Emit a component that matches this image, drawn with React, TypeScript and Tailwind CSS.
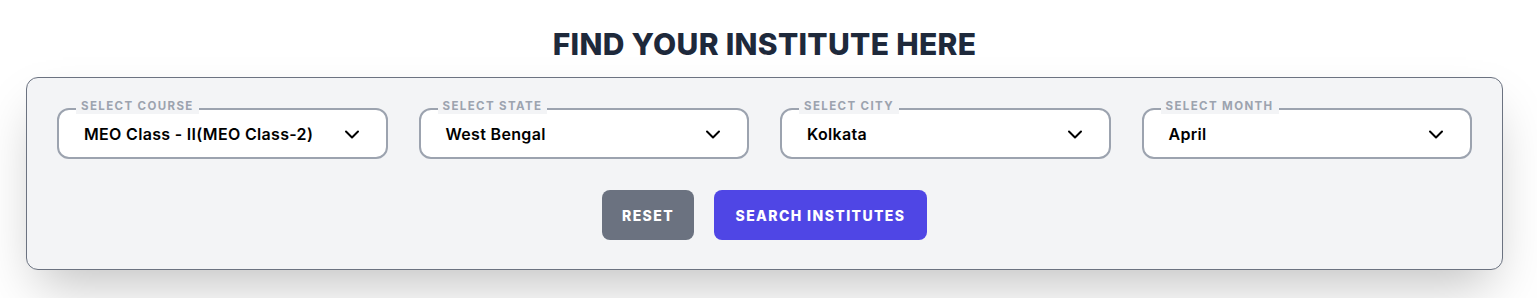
import React from 'react';

interface FieldProps {
  label: string;
  value: string;
}

const Chevron: React.FC = () => (
  <svg className="h-6 w-6 text-black" viewBox="0 0 24 24" fill="none" stroke="currentColor" strokeWidth={2} strokeLinecap="round" strokeLinejoin="round">
    <path d="M6 9.5l6 6 6-6" />
  </svg>
);

const SelectField: React.FC<FieldProps> = ({ label, value }) => (
  <div className="relative">
    <span className="absolute -top-[10px] left-[19px] bg-[#f3f4f6] px-[5px] text-[11.5px] font-bold uppercase leading-4 tracking-[0.12em] text-[#9ca3af]">
      {label}
    </span>
    <div className="flex h-[51px] items-center justify-between rounded-xl border-2 border-[#9ca3af] bg-white pl-[25px] pr-[22px]">
      <span className="text-[16px] font-semibold tracking-[0.02em] text-black">{value}</span>
      <Chevron />
    </div>
  </div>
);

export default function App() {
  const fields: FieldProps[] = [
    { label: 'Select Course', value: 'MEO Class - II(MEO Class-2)' },
    { label: 'Select State', value: 'West Bengal' },
    { label: 'Select City', value: 'Kolkata' },
    { label: 'Select Month', value: 'April' },
  ];

  return (
    <div className="min-h-[298px] bg-white pl-[26px] pt-[26px] font-['Inter',sans-serif]">
      <div className="w-[1477px]">
        <h2 className="text-center text-[30px] font-extrabold leading-9 tracking-[0.01em] text-[#1e293b]">FIND YOUR INSTITUTE HERE</h2>
        <div className="mt-[15px] rounded-xl border border-[#6b7280] bg-[#f3f4f6] px-[30px] pb-[29px] pt-[30px] shadow-2xl">
          <div className="grid grid-cols-4 gap-[31px]">
            {fields.map((f) => (
              <SelectField key={f.label} label={f.label} value={f.value} />
            ))}
          </div>
          <div className="mt-[31px] flex justify-center gap-5">
            <button className="h-[50px] w-[92px] rounded-lg bg-[#6b7280] text-[14px] font-extrabold uppercase tracking-[0.1em] text-white">
              Reset
            </button>
            <button className="h-[50px] w-[213px] rounded-lg bg-[#4f46e5] text-[14px] font-extrabold uppercase tracking-[0.1em] text-white">
              Search Institutes
            </button>
          </div>
        </div>
      </div>
    </div>
  );
}
